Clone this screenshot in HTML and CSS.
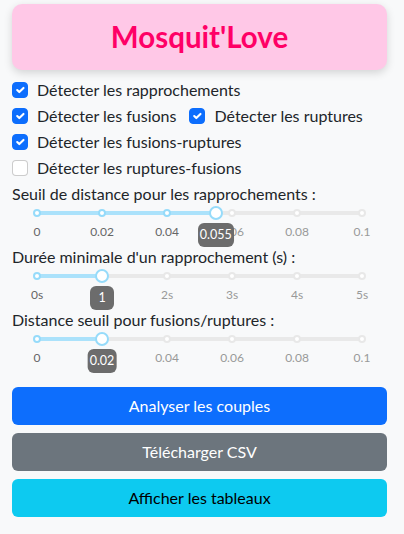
FILE: index.html
```html
<!DOCTYPE html>
<html lang="fr">
<head>
<meta charset="utf-8">
<title>Mosquit'Love</title>
<link rel="stylesheet" href="styles.css">
</head>
<body>
<div class="app">
  <div class="header"><h1 class="title">Mosquit'Love</h1></div>

  <div class="checks">
    <div class="check-row">
      <label class="check"><span class="box on"><svg viewBox="0 0 20 20"><path d="M6 10l3 3l6-6"/></svg></span>Détecter les rapprochements</label>
    </div>
    <div class="check-row">
      <label class="check"><span class="box on"><svg viewBox="0 0 20 20"><path d="M6 10l3 3l6-6"/></svg></span>Détecter les fusions</label>
      <label class="check"><span class="box on"><svg viewBox="0 0 20 20"><path d="M6 10l3 3l6-6"/></svg></span>Détecter les ruptures</label>
    </div>
    <div class="check-row">
      <label class="check"><span class="box on"><svg viewBox="0 0 20 20"><path d="M6 10l3 3l6-6"/></svg></span>Détecter les fusions-ruptures</label>
    </div>
    <div class="check-row">
      <label class="check"><span class="box"></span>Détecter les ruptures-fusions</label>
    </div>
  </div>

  <div class="field">
    <div class="field-label">Seuil de distance pour les rapprochements :</div>
    <div class="slider">
      <div class="rail"></div>
      <div class="track" style="width:55%"></div>
      <span class="dot active" style="left:0%"></span>
      <span class="dot active" style="left:20%"></span>
      <span class="dot active" style="left:40%"></span>
      <span class="dot" style="left:60%"></span>
      <span class="dot" style="left:80%"></span>
      <span class="dot" style="left:100%"></span>
      <span class="handle" style="left:55%"></span>
      <div class="marks">
        <span class="mark active" style="left:0%">0</span>
        <span class="mark active" style="left:20%">0.02</span>
        <span class="mark active" style="left:40%">0.04</span>
        <span class="mark" style="left:60%">0.06</span>
        <span class="mark" style="left:80%">0.08</span>
        <span class="mark" style="left:100%">0.1</span>
      </div>
      <span class="tip" style="left:55%">0.055</span>
    </div>
  </div>

  <div class="field">
    <div class="field-label">Durée minimale d'un rapprochement (s) :</div>
    <div class="slider">
      <div class="rail"></div>
      <div class="track" style="width:20%"></div>
      <span class="dot active" style="left:0%"></span>
      <span class="dot active" style="left:20%"></span>
      <span class="dot" style="left:40%"></span>
      <span class="dot" style="left:60%"></span>
      <span class="dot" style="left:80%"></span>
      <span class="dot" style="left:100%"></span>
      <span class="handle" style="left:20%"></span>
      <div class="marks">
        <span class="mark active" style="left:0%">0s</span>
        <span class="mark active" style="left:20%">1s</span>
        <span class="mark" style="left:40%">2s</span>
        <span class="mark" style="left:60%">3s</span>
        <span class="mark" style="left:80%">4s</span>
        <span class="mark" style="left:100%">5s</span>
      </div>
      <span class="tip" style="left:20%">1</span>
    </div>
  </div>

  <div class="field">
    <div class="field-label">Distance seuil pour fusions/ruptures :</div>
    <div class="slider">
      <div class="rail"></div>
      <div class="track" style="width:20%"></div>
      <span class="dot active" style="left:0%"></span>
      <span class="dot active" style="left:20%"></span>
      <span class="dot" style="left:40%"></span>
      <span class="dot" style="left:60%"></span>
      <span class="dot" style="left:80%"></span>
      <span class="dot" style="left:100%"></span>
      <span class="handle" style="left:20%"></span>
      <div class="marks">
        <span class="mark active" style="left:0%">0</span>
        <span class="mark active" style="left:20%">0.02</span>
        <span class="mark" style="left:40%">0.04</span>
        <span class="mark" style="left:60%">0.06</span>
        <span class="mark" style="left:80%">0.08</span>
        <span class="mark" style="left:100%">0.1</span>
      </div>
      <span class="tip" style="left:20%">0.02</span>
    </div>
  </div>

  <div class="buttons">
    <button class="btn btn-primary">Analyser les couples</button>
    <button class="btn btn-secondary">Télécharger CSV</button>
    <button class="btn btn-info">Afficher les tableaux</button>
  </div>
</div>
</body>
</html>
```

FILE: styles.css
```css
html, body {
  margin: 0;
  padding: 0;
  background: #f8f9fa;
}
body {
  font-family: Lato, "Liberation Sans", sans-serif;
  font-size: 16px;
  line-height: 24px;
  color: #212529;
}
.app {
  padding: 4px 17px 0 12px;
}
.header {
  background: #ffc8e7;
  border-radius: 10px;
  height: 66px;
  display: flex;
  align-items: center;
  justify-content: center;
  box-shadow: 0 3px 8px rgba(0, 0, 0, 0.15);
}
.title {
  margin: 0;
  font-size: 29.5px;
  font-weight: 700;
  color: #ff0066;
  line-height: 1.2;
}
.checks {
  margin-top: 8px;
}
.check-row {
  display: flex;
  gap: 13px;
  margin-bottom: 2px;
}
.check {
  display: flex;
  align-items: center;
  gap: 9px;
  height: 24px;
}
.box {
  width: 16px;
  height: 16px;
  box-sizing: border-box;
  border: 1px solid rgba(0, 0, 0, 0.2);
  border-radius: 4px;
  background: #fff;
  display: flex;
  flex: none;
}
.box.on {
  background: #0d6efd;
  border-color: #0d6efd;
}
.box svg {
  width: 14px;
  height: 14px;
  fill: none;
  stroke: #fff;
  stroke-width: 3;
  stroke-linecap: round;
  stroke-linejoin: round;
}
.field {
  padding-bottom: 25px;
}
.field-label {
  line-height: 24px;
}
.slider {
  position: relative;
  height: 14px;
  margin: 0 25px;
}
.rail, .track {
  position: absolute;
  top: 5px;
  left: 0;
  height: 4px;
  border-radius: 6px;
}
.rail {
  right: 0;
  background: #e9e9e9;
}
.track {
  background: #abe2fb;
}
.dot {
  position: absolute;
  top: 3px;
  width: 8px;
  height: 8px;
  margin-left: -4px;
  box-sizing: border-box;
  border: 2px solid #e8e8e8;
  border-radius: 50%;
  background: #fff;
}
.dot.active {
  border-color: #96dbfa;
}
.handle {
  position: absolute;
  top: 0;
  width: 14px;
  height: 14px;
  margin-left: -7px;
  box-sizing: border-box;
  border: 2px solid #96dbfa;
  border-radius: 50%;
  background: #fff;
  z-index: 2;
}
.marks {
  position: absolute;
  top: 17px;
  left: 0;
  right: 0;
  font-size: 12px;
  line-height: 18px;
}
.mark {
  position: absolute;
  transform: translateX(-50%);
  color: #999;
  white-space: nowrap;
}
.mark.active {
  color: #666;
}
.tip {
  position: absolute;
  top: 17px;
  transform: translateX(-50%);
  min-width: 24px;
  height: 24px;
  box-sizing: border-box;
  padding: 6px 2px;
  font-size: 12.5px;
  line-height: 12px;
  color: #fff;
  text-align: center;
  background: #6c6c6c;
  border-radius: 6px;
  z-index: 3;
}
.buttons {
  margin-top: 16px;
  display: flex;
  flex-direction: column;
  gap: 8px;
}
.btn {
  display: block;
  width: 100%;
  height: 38px;
  border: none;
  border-radius: 6px;
  font-family: inherit;
  font-size: 16px;
  line-height: 24px;
  padding: 6px 12px;
  color: #fff;
}
.btn-primary { background: #0d6efd; }
.btn-secondary { background: #6c757d; }
.btn-info { background: #0dcaf0; color: #000; }
```
